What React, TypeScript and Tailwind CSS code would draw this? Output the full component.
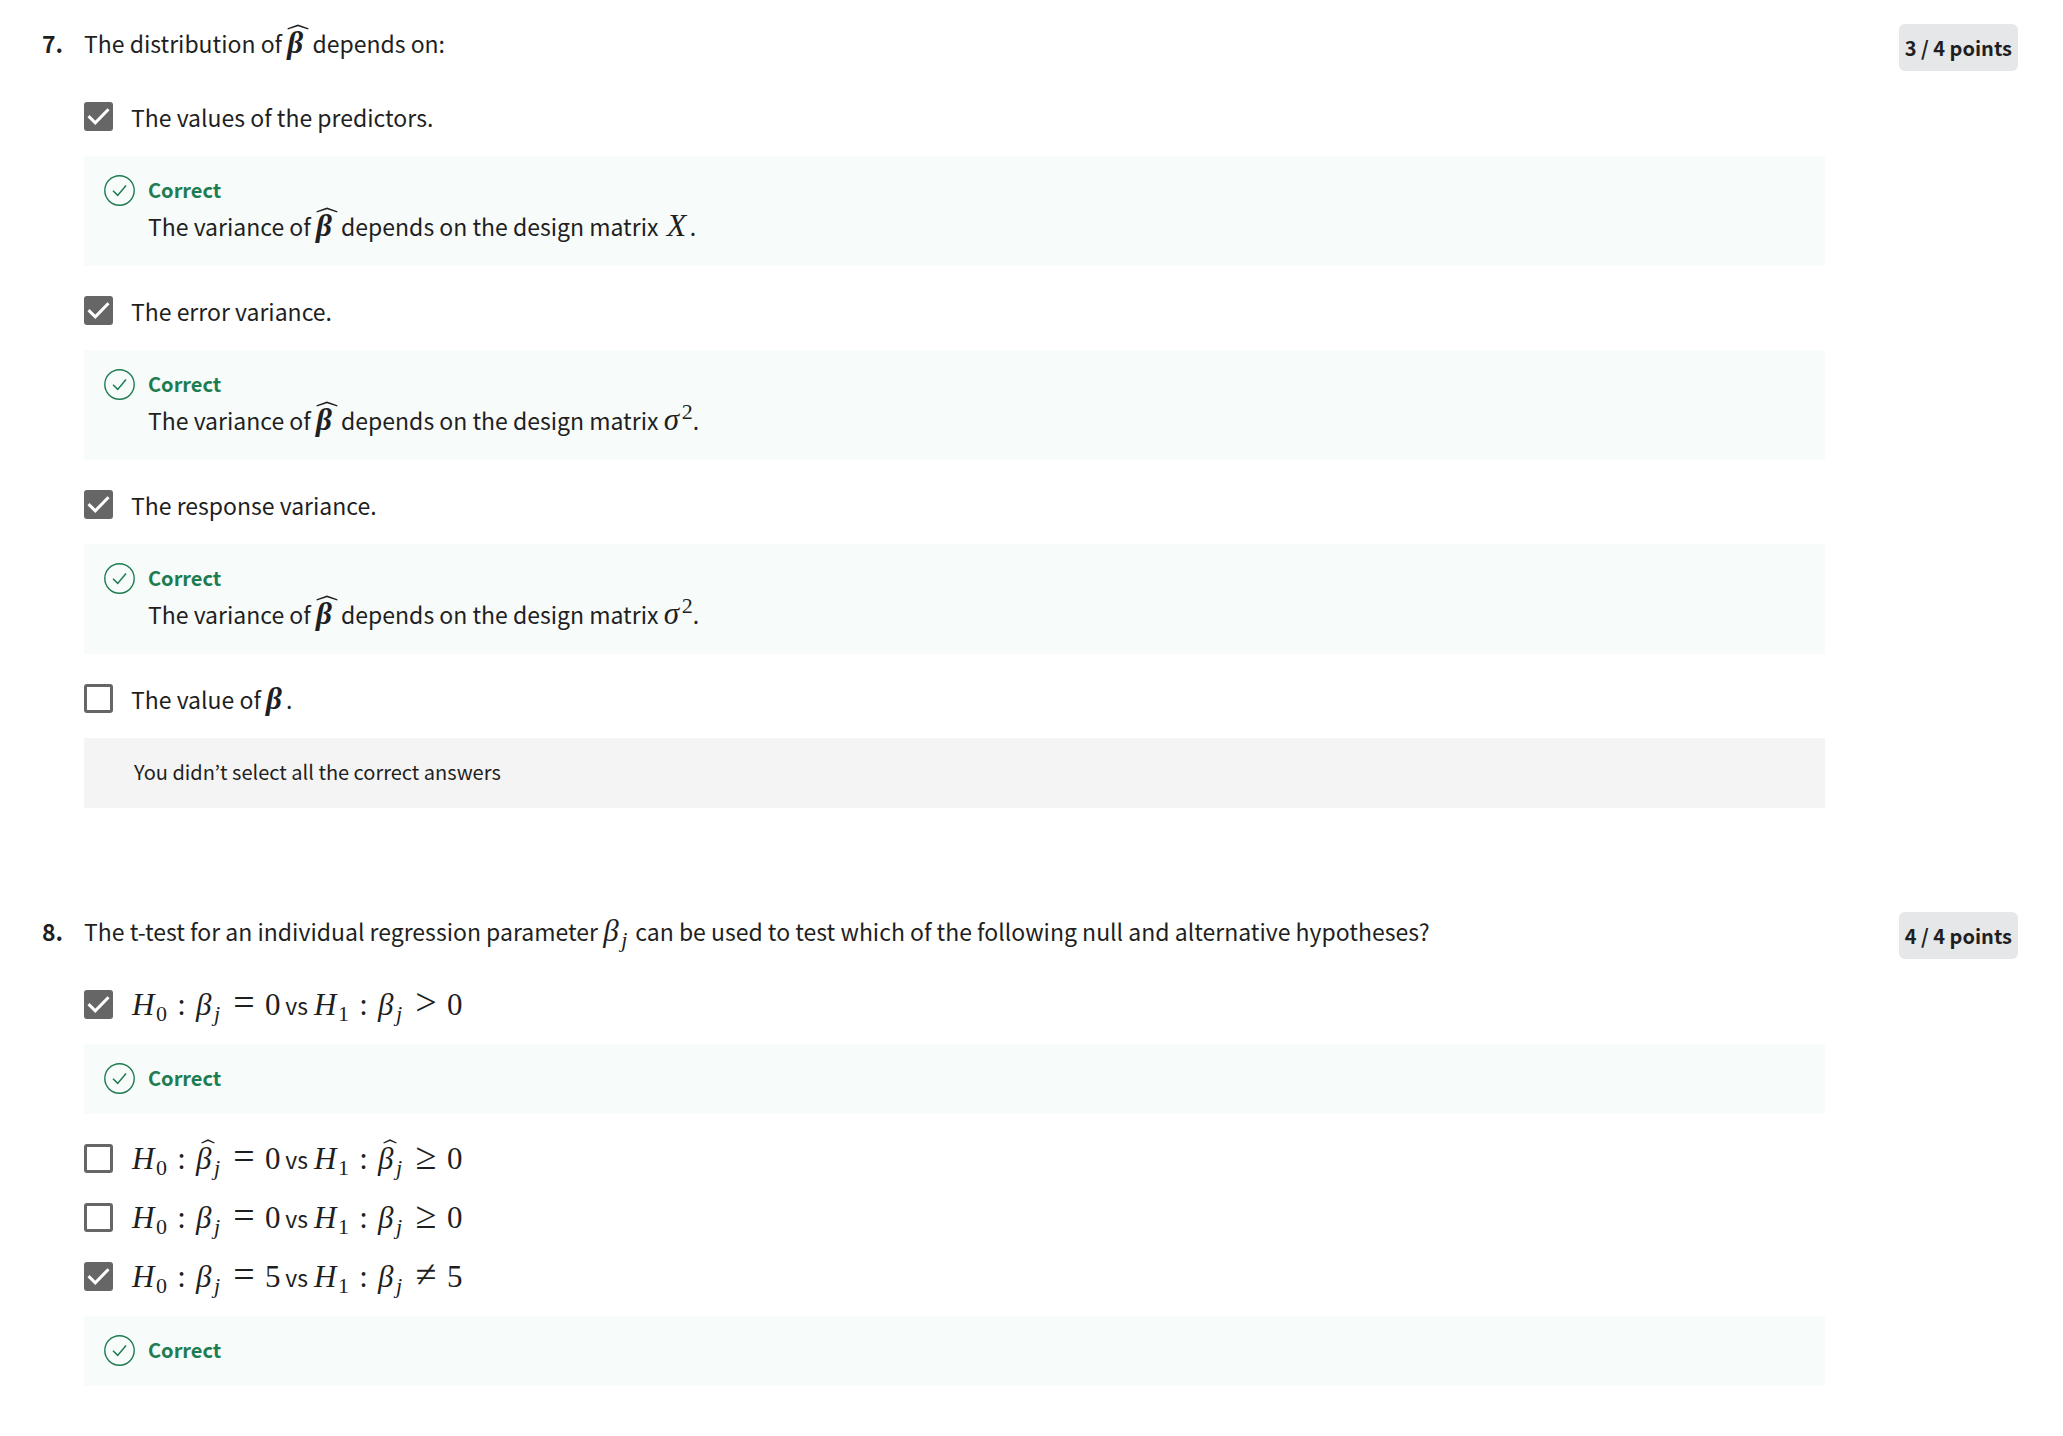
import React, { type ReactNode } from "react";

const mathFont = "font-['Liberation_Serif','DejaVu_Serif',serif]";

function Hat({ wide = false }: { wide?: boolean }) {
  return wide ? (
    <svg aria-hidden="true" viewBox="0 0 22 6" className="absolute -top-[3px] left-0 h-[6px] w-[22px]">
      <path d="M0.5 4.3 L11 0.4 L21.5 4.3 L21.2 5.4 L11 2.3 L0.8 5.4 Z" fill="currentColor" />
    </svg>
  ) : (
    <svg aria-hidden="true" viewBox="0 0 14 5" className="absolute -top-[4px] left-[5px] h-[5px] w-[14px]">
      <path d="M0.3 3.6 L7 0.2 L13.7 3.6 L13.2 4.6 L7 2 L0.8 4.6 Z" fill="currentColor" />
    </svg>
  );
}

function BoldBeta({ hat = false }: { hat?: boolean }) {
  return (
    <span className={`${mathFont} relative inline-block w-[20px] text-[31px] leading-none font-bold italic`}>
      β{hat && <Hat wide />}
    </span>
  );
}

function BetaJ({ hat = false }: { hat?: boolean }) {
  return (
    <span className={`${mathFont} relative inline-block w-[27px] text-[31px] leading-none italic`}>
      <span className="inline-block w-[18px]">β</span>
      <sub className="text-[22px]">j</sub>
      {hat && <Hat />}
    </span>
  );
}

function Hypothesis({ index, hat, relation, value }: { index: string; hat?: boolean; relation: string; value: string }) {
  return (
    <span className={`${mathFont} inline-flex items-baseline text-[31px] leading-none`}>
      <span className="w-[25px] pl-px italic">H</span>
      <sub className="w-[11px] text-[22px]">{index}</sub>
      <span className="w-[29px] text-center">:</span>
      <BetaJ hat={hat} />
      <span className="w-[42px] text-center text-[38px] leading-[30px]">{relation}</span>
      <span className="w-[15px]">{value}</span>
    </span>
  );
}

function Score({ children }: { children: ReactNode }) {
  return (
    <div className="flex h-[47px] shrink-0 items-center rounded-md bg-[#e5e7e8] px-[6px] text-[20px] leading-[28px] font-bold">
      {children}
    </div>
  );
}

function Question({ number, title, score, children }: { number: string; title: ReactNode; score: string; children: ReactNode }) {
  return (
    <section className="flex items-start">
      <div className="w-[42px] shrink-0 text-[23px] leading-[38px] font-bold">{number}</div>
      <div className="mr-[74px] min-w-0 flex-1">
        <h2 className="mb-[37px] text-[23px] leading-[38px] font-normal">{title}</h2>
        {children}
      </div>
      <Score>{score}</Score>
    </section>
  );
}

function Option({ checked = false, children }: { checked?: boolean; children: ReactNode }) {
  return (
    <label className="flex items-start gap-[18px] text-[23px] leading-[36px]">
      <span className="relative mt-[3px] block size-[29px] shrink-0">
        <input
          type="checkbox"
          defaultChecked={checked}
          className="peer block size-[29px] appearance-none rounded-[3px] border-3 border-[#666666] bg-white checked:bg-[#666666]"
        />
        <svg
          aria-hidden="true"
          viewBox="0 0 29 29"
          className="pointer-events-none absolute inset-0 hidden size-[29px] peer-checked:block"
        >
          <path d="M4.5 14.2 L11.3 20.8 L24.5 7.2" fill="none" stroke="white" strokeWidth="3" />
        </svg>
      </span>
      <span>{children}</span>
    </label>
  );
}

function Correct({ children }: { children?: ReactNode }) {
  return (
    <div className="flex items-start gap-[13px] bg-[#f7fbf9] pt-[20px] pr-[20px] pb-[22px] pl-[20px]">
      <svg aria-hidden="true" viewBox="0 0 31 31" className="-mt-[1px] -mb-[3px] size-[31px] shrink-0">
        <circle cx="15.5" cy="15.5" r="14.7" fill="none" stroke="#1d7c50" strokeWidth="1.4" />
        <path d="M9 15.8 L13.7 20.4 L22 10.4" fill="none" stroke="#1d7c50" strokeWidth="1.5" />
      </svg>
      <div>
        <div className="text-[20px] leading-[28px] font-bold text-[#1d7c50]">Correct</div>
        {children && <div className="mt-[4px] text-[23px] leading-[36px]">{children}</div>}
      </div>
    </div>
  );
}

const cardGap = "flex flex-col gap-[21px]";

export default function App() {
  return (
    <main className="flex flex-col gap-[104px] bg-white pt-[24px] pr-[45px] pb-[48px] pl-[42px] font-['Noto_Sans_CJK_KR',sans-serif] text-[#1f1f1f]">
      <Question number="7." score="3 / 4 points" title={<>The distribution of <BoldBeta hat /> depends on:</>}>
        <div className="flex flex-col gap-[27px]">
          <div className={cardGap}>
            <Option checked>The values of the predictors.</Option>
            <Correct>
              The variance of <BoldBeta hat /> depends on the design matrix{" "}
              <span className={`${mathFont} inline-block w-[26px] text-center text-[32px] leading-none italic`}>X</span>.
            </Correct>
          </div>
          {["The error variance.", "The response variance."].map((text) => (
            <div key={text} className={cardGap}>
              <Option checked>{text}</Option>
              <Correct>
                The variance of <BoldBeta hat /> depends on the design matrix{" "}
                <span className={`${mathFont} text-[31px] leading-none`}>
                  <span className="inline-block w-[18px] italic">σ</span>
                  <sup className="text-[22px]">2</sup>
                </span>
                .
              </Correct>
            </div>
          ))}
          <div className={cardGap}>
            <Option>
              The value of <BoldBeta />.
            </Option>
            <div className="bg-[#f4f4f4] pt-[20px] pr-[20px] pb-[22px] pl-[50px] text-[20px] leading-[28px]">
              You didn’t select all the correct answers
            </div>
          </div>
        </div>
      </Question>

      <Question
        number="8."
        score="4 / 4 points"
        title={
          <>
            The t-test for an individual regression parameter <BetaJ /> can be used to test which of the following null and
            alternative hypotheses?
          </>
        }
      >
        <div className="flex flex-col gap-[27px]">
          <div className={cardGap}>
            <Option checked>
              <Hypothesis index="0" relation="=" value="0" /> vs <Hypothesis index="1" relation=">" value="0" />
            </Option>
            <Correct />
          </div>
          <div className="flex flex-col gap-[23px]">
            <Option>
              <Hypothesis index="0" hat relation="=" value="0" /> vs <Hypothesis index="1" hat relation="≥" value="0" />
            </Option>
            <Option>
              <Hypothesis index="0" relation="=" value="0" /> vs <Hypothesis index="1" relation="≥" value="0" />
            </Option>
            <div className={cardGap}>
              <Option checked>
                <Hypothesis index="0" relation="=" value="5" /> vs <Hypothesis index="1" relation="≠" value="5" />
              </Option>
              <Correct />
            </div>
          </div>
        </div>
      </Question>
    </main>
  );
}
